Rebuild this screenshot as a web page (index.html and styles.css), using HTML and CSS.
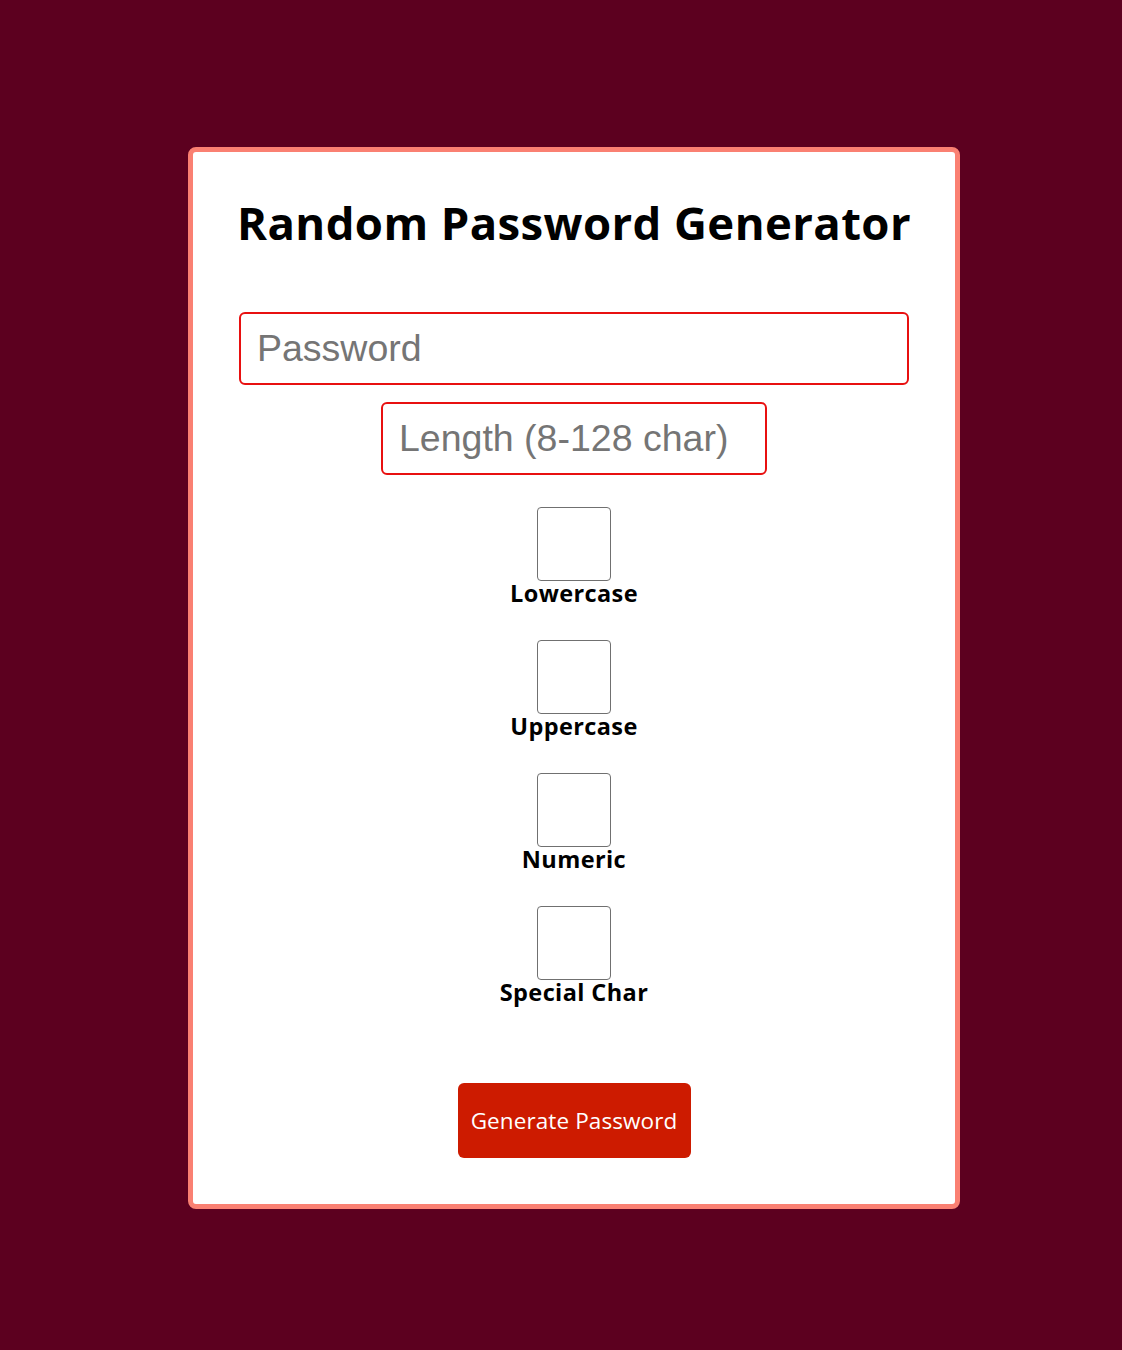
FILE: index.html
```html
<!DOCTYPE html>
<html lang="en">
<head>
<meta charset="utf-8">
<title>Random Password Generator</title>
<link rel="stylesheet" href="styles.css">
</head>
<body>
<div class="card">
  <h1 class="title">Random Password Generator</h1>
  <input class="field field-password" type="text" placeholder="Password">
  <input class="field field-length" type="text" placeholder="Length (8-128 char)">
  <div class="options">
    <label class="option"><input class="check" type="checkbox"><span class="option-label">Lowercase</span></label>
    <label class="option"><input class="check" type="checkbox"><span class="option-label">Uppercase</span></label>
    <label class="option"><input class="check" type="checkbox"><span class="option-label">Numeric</span></label>
    <label class="option"><input class="check" type="checkbox"><span class="option-label">Special Char</span></label>
  </div>
  <button class="generate" type="button">Generate Password</button>
</div>
</body>
</html>
```
FILE: styles.css
```css
html, body {
  margin: 0;
  padding: 0;
}
body {
  background: #5c001f;
  padding-top: 147px;
  padding-left: 188px;
  min-height: 1350px;
  box-sizing: border-box;
  font-family: "Open Sans", "Noto Sans", sans-serif;
}
.card {
  width: 772px;
  box-sizing: border-box;
  background: #ffffff;
  border: 5px solid #fa8072;
  border-radius: 8px;
  padding: 44px 46px 46px 46px;
  display: flex;
  flex-direction: column;
  align-items: center;
}
.title {
  margin: 0;
  font-size: 45.5px;
  font-weight: 700;
  letter-spacing: 0.4px;
  color: #000;
  line-height: 52px;
  white-space: nowrap;
  text-align: center;
}
.field {
  box-sizing: border-box;
  border: 2px solid #e81010;
  border-radius: 6px;
  font-family: "Liberation Sans", Arial, sans-serif;
  font-size: 37.5px;
  padding: 0 16px;
  height: 73px;
  color: #000;
  outline: none;
  background: #fff;
}
.field::placeholder {
  color: #757575;
}
.field-password {
  width: 670px;
  margin-top: 64px;
}
.field-length {
  width: 386px;
  margin-top: 17px;
}
.options {
  display: flex;
  flex-direction: column;
  align-items: center;
  gap: 35px;
  margin-top: 32px;
}
.option {
  display: flex;
  flex-direction: column;
  align-items: center;
}
.check {
  appearance: none;
  -webkit-appearance: none;
  margin: 0;
  width: 74px;
  height: 74px;
  box-sizing: border-box;
  border: 1px solid #707070;
  border-radius: 4px;
  background: #fff;
}
.option-label {
  font-size: 23.5px;
  font-weight: 700;
  letter-spacing: 0.4px;
  color: #000;
  line-height: 24px;
}
.generate {
  margin-top: 79px;
  width: 233px;
  height: 75px;
  border: none;
  border-radius: 6px;
  background: #cd1b00;
  color: #fff;
  font-family: "Open Sans", "Noto Sans", sans-serif;
  font-size: 22.5px;
  letter-spacing: 0.1px;
  padding: 0;
}
```
